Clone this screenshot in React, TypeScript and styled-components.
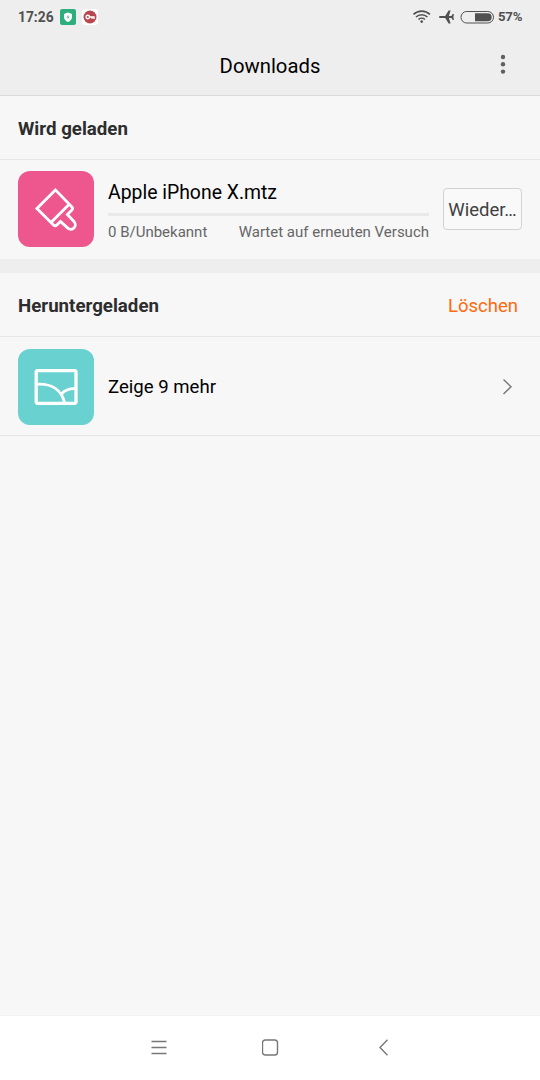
import React from "react";
import styled, { createGlobalStyle } from "styled-components";

const Global = createGlobalStyle`
  * { box-sizing: border-box; }
  body { margin: 0; background: #f7f7f7; }
`;
const Screen = styled.div`
  width: 540px;
  height: 1080px;
  display: flex;
  flex-direction: column;
  background: #f7f7f7;
  color: #000;
  font-family: Roboto, "Liberation Sans", sans-serif;
  white-space: nowrap;
  overflow: hidden;
`;
const Header = styled.header`
  height: 96px;
  background: #eeeeee;
  border-bottom: 1px solid #dadada;
`;
const StatusBar = styled.div`
  height: 32px;
  display: flex;
  align-items: center;
  padding: 1px 17px 0 18px;
  color: #505050;
`;
const Clock = styled.span`
  font-size: 13.8px;
  font-weight: 700;
  width: 42px;
  padding-top: 1px;
`;
const StatusIcons = styled.div`
  flex: 1;
  display: flex;
  gap: 6px;
`;
const Percent = styled.span`
  font-size: 13.2px;
  font-weight: 700;
  letter-spacing: -0.2px;
  width: 25px;
`;
const TitleBar = styled.div`
  height: 63px;
  display: grid;
  grid-template-columns: 74px 1fr 74px;
  align-items: center;
  justify-items: center;
  padding-top: 2px;
`;
const Title = styled.h1`
  margin: 2px 0 0;
  grid-column: 2;
  font-size: 20.3px;
  font-weight: 400;
  line-height: 28px;
`;
const SectionHead = styled.div`
  height: 64px;
  display: flex;
  align-items: center;
  justify-content: space-between;
  padding: 1px 22px 0 18px;
  border-bottom: 1px solid #e6e6e6;
`;
const SectionTitle = styled.h2`
  margin: 2px 0 0;
  font-size: 18.7px;
  font-weight: 700;
  color: #2d2d2d;
`;
const ClearAction = styled.span`
  margin-top: 2px;
  font-size: 18.5px;
  color: #ff6a0c;
`;
const Row = styled.div<{ $last?: boolean }>`
  height: 99px;
  display: flex;
  align-items: center;
  padding: ${(p) => (p.$last ? "1px 18px 0" : "0 18px 1px")};
  border-bottom: ${(p) => (p.$last ? "1px solid #e6e6e6" : "0")};
`;
const Tile = styled.div<{ $color: string }>`
  width: 76px;
  height: 76px;
  flex: none;
  border-radius: 12px;
  background: ${(p) => p.$color};
  margin-right: 14px;
`;
const Details = styled.div`
  width: 321px;
  display: flex;
  flex-direction: column;
  padding-top: 4px;
`;
const ItemName = styled.span<{ $compact?: boolean }>`
  font-size: ${(p) => (p.$compact ? "18.6px" : "19.4px")};
  line-height: 24px;
  padding-top: ${(p) => (p.$compact ? "1px" : "0")};
`;
const Progress = styled.div`
  height: 3px;
  border-radius: 1px;
  background: #e9e9e9;
  margin: 8px 0 6px;
`;
const Meta = styled.div`
  display: flex;
  justify-content: space-between;
  font-size: 15px;
  line-height: 20px;
  color: #666;
`;
const RetryButton = styled.button`
  width: 79px;
  height: 42px;
  margin: 0 0 0 14px;
  padding: 1px 0 0;
  flex: none;
  border: 1px solid #d2d2d2;
  border-radius: 4px;
  background: #f9f9f9;
  color: #404040;
  font: 400 18.5px Roboto, "Liberation Sans", sans-serif;
`;
const Gap = styled.div`
  height: 14px;
  background: #eeeeee;
`;
const Chevron = styled.svg`
  margin-left: auto;
`;
const NavBar = styled.nav`
  margin-top: auto;
  height: 65px;
  padding: 0 0 2px 1px;
  background: #fff;
  border-top: 1px solid #f1f1f1;
  display: flex;
  align-items: center;
  justify-content: center;
  gap: 94px;
`;

export default function App() {
  return (
    <Screen>
      <Global />
      <Header>
        <StatusBar>
          <Clock>17:26</Clock>
          <StatusIcons>
            <svg width="16" height="16" viewBox="0 0 16 16">
              <rect width="16" height="16" rx="2" fill="#2daf7d" />
              <path d="M8 3.5 12 5v3c0 2.4-1.6 4-4 5-2.4-1-4-2.6-4-5V5Z" fill="#fff" />
              <path d="M8.5 5.5 6.8 8.3h1.1l-.3 2.3 1.7-2.9H8.2Z" fill="#2daf7d" />
            </svg>
            <svg width="16" height="16" viewBox="0 0 16 16">
              <rect width="16" height="16" rx="3" fill="#fff" />
              <circle cx="8" cy="8" r="6.5" fill="#b8474d" />
              <circle cx="5.8" cy="8" r="1.7" fill="none" stroke="#fff" strokeWidth="1.4" />
              <path d="M7.5 8H12v2M10 8v1.7" fill="none" stroke="#fff" strokeWidth="1.4" />
            </svg>
          </StatusIcons>
          <svg width="86" height="16" viewBox="412 8 86 16" fill="none" stroke="#505050">
            <path d="M413.5 13.4a11.8 11.8 0 0 1 16.4 0M416 16a8.2 8.2 0 0 1 11.4 0M418.5 18.5a4.7 4.7 0 0 1 6.4 0" strokeWidth="1.6" />
            <circle cx="421.7" cy="20.6" r="1.3" fill="#505050" stroke="none" />
            <path d="M439 16c0-.6.7-1 1.5-1h4.7l3.4-5.5h2L448.9 15h2.6l1.2-2h1.2l-.5 3 .5 3h-1.2l-1.2-2h-2.6l1.7 5.5h-2L445.2 17h-4.7c-.8 0-1.5-.4-1.5-1Z" fill="#505050" stroke="none" />
            <rect x="461" y="10.5" width="32.5" height="11.5" rx="5.7" />
            <path d="M475 12.3h12.7a3.95 3.95 0 0 1 0 7.9H475Z" fill="#505050" stroke="none" />
          </svg>
          <Percent>57%</Percent>
        </StatusBar>
        <TitleBar>
          <Title>Downloads</Title>
          <svg width="6" height="22" viewBox="0 0 6 22" fill="#606060">
            <circle cx="3" cy="3" r="2.2" />
            <circle cx="3" cy="10.3" r="2.2" />
            <circle cx="3" cy="17.6" r="2.2" />
          </svg>
        </TitleBar>
      </Header>
      <SectionHead>
        <SectionTitle>Wird geladen</SectionTitle>
      </SectionHead>
      <Row>
        <Tile $color="#ee578e">
          <svg width="76" height="76" viewBox="18.3 171.3 76 76" fill="none" stroke="#fff" strokeWidth="2.8">
            <path d="M55.7 190.2 37.2 208.7 53.8 225.3q1.7 1.7 3.4 0l3.5-3.5 7.4 6.6a4.5 4.5 0 0 0 6.4-6.3l-6.8-7.3 4.3-4.3q1.7-1.7 0-3.4ZM69.5 204.5 52 222" />
          </svg>
        </Tile>
        <Details>
          <ItemName>Apple iPhone X.mtz</ItemName>
          <Progress />
          <Meta>
            <span>0 B/Unbekannt</span>
            <span>Wartet auf erneuten Versuch</span>
          </Meta>
        </Details>
        <RetryButton>Wieder…</RetryButton>
      </Row>
      <Gap />
      <SectionHead>
        <SectionTitle>Heruntergeladen</SectionTitle>
        <ClearAction>Löschen</ClearAction>
      </SectionHead>
      <Row $last>
        <Tile $color="#69d1cf">
          <svg width="76" height="76" viewBox="18.3 348.3 76 76" fill="none" stroke="#fff" strokeWidth="3.3">
            <rect x="36.5" y="370" width="39.8" height="32.6" rx="1.5" />
            <path d="M37 383.5c15-1 25 6 28 19M62 393q5-5.5 14-5" strokeWidth="2.9" />
          </svg>
        </Tile>
        <ItemName $compact>Zeige 9 mehr</ItemName>
        <Chevron width="20" height="20" viewBox="0 0 20 20" fill="none" stroke="#777" strokeWidth="1.4">
          <path d="m1.5 2.5 7.5 7.3-7.5 7.3" />
        </Chevron>
      </Row>
      <NavBar>
        <svg width="17" height="17" viewBox="0 0 17 17" stroke="#777" strokeWidth="1.4">
          <path d="M.5 2.5h15M.5 8.5h15M.5 14.5h15" />
        </svg>
        <svg width="17" height="17" viewBox="0 0 17 17" fill="none" stroke="#777" strokeWidth="1.4">
          <rect x=".5" y="1" width="15" height="15" rx="2.8" />
        </svg>
        <svg width="17" height="17" viewBox="0 0 17 17" fill="none" stroke="#777" strokeWidth="1.4">
          <path d="M14.5.7 7 8.5l7.5 7.8" />
        </svg>
      </NavBar>
    </Screen>
  );
}
